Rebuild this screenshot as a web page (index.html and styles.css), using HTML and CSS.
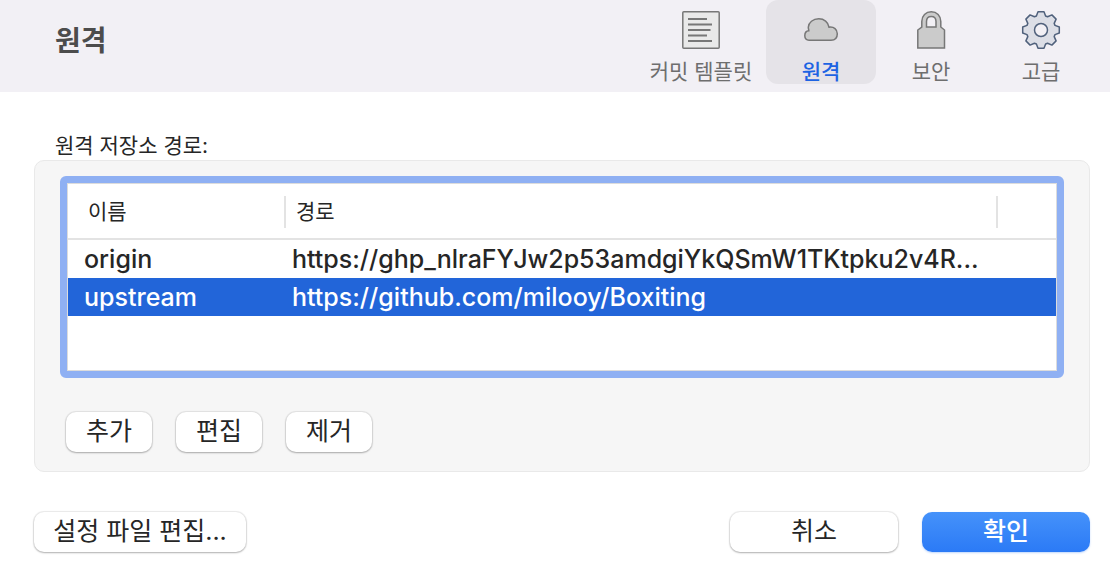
FILE: index.html
```html
<!DOCTYPE html>
<html lang="ko">
<head>
  <meta charset="UTF-8" />
  <meta name="viewport" content="width=device-width, initial-scale=1" />
  <title>원격</title>
  <link rel="stylesheet" href="styles.css">
</head>
<body>

<header class="toolbar">
  <h1>원격</h1>
  <nav class="tabs">
    <button type="button" class="tab tab-wide">
      <svg width="40" height="40" viewBox="0 0 40 40" fill="none" stroke="#777" stroke-width="1.500">
        <rect x="1.800" y="1.800" width="36.400" height="36.400" rx="1" fill="#e9e9e9" />
        <path d="M7 9h19M7 14.500h24M7 20h22.500M7 25.500h19M7 31h24" stroke-width="2" />
      </svg>
      커밋 템플릿
    </button>
    <button type="button" class="tab active">
      <svg width="40" height="40" viewBox="0 0 40 40" fill="#cbcbcb" stroke="#777" stroke-width="1.500">
        <path d="M8 30.300C5.300 30.300 3.800 28.500 3.800 25.800C3.800 23 5.300 21 7.800 20.800C7.800 19.500 7.300 18.800 7.300 17.300C7.500 12.500 12 8.800 17.800 8.800C23 8.800 27.300 12 28 17.200C33 16.500 36.300 19.500 36.300 23.800C36.300 27.800 33.800 30.300 30 30.300Z" />
      </svg>
      원격
    </button>
    <button type="button" class="tab">
      <svg width="40" height="40" viewBox="0 0 40 40" fill="#cbcbcb" stroke="#777" stroke-width="1.500">
        <path d="M6.800 38V20L10.800 17V11.500C10.800 5.800 14.800 1.800 20.300 1.800S29.800 5.800 29.800 11.500V17L33.500 20V38Z" />
        <path d="M15.500 17V11.500C15.500 8.300 17.500 6.500 20.300 6.500S25 8.300 25 11.500V17Z" fill="#f2f0f5" />
      </svg>
      보안
    </button>
    <button type="button" class="tab">
      <svg width="40" height="40" viewBox="0 0 40 40" fill="#dcdee6" stroke="#50617c" stroke-width="1.500" stroke-linejoin="round">
        <g transform="translate(20 20)">
          <path d="M-4.600-14L-3-18.300H3L4.600-14L6.600-13.200L10.900-15.100L15.100-10.900L13.200-6.600L14-4.600L18.300-3V3L14 4.600L13.200 6.600L15.100 10.900L10.900 15.100L6.600 13.200L4.600 14L3 18.300H-3L-4.600 14L-6.600 13.200L-10.900 15.100L-15.100 10.900L-13.200 6.600L-14 4.600L-18.300 3V-3L-14-4.600L-13.200-6.600L-15.100-10.900L-10.900-15.100L-6.600-13.200Z" />
          <circle r="6.500" fill="#f2f0f5" />
        </g>
      </svg>
      고급
    </button>
  </nav>
</header>

<main>
  <h2 id="remotes-title">원격 저장소 경로:</h2>

  <section class="group">
    <div class="table-frame">
      <table aria-labelledby="remotes-title">
        <colgroup>
          <col class="col-name">
          <col>
          <col class="col-end">
        </colgroup>
        <thead>
          <tr>
            <th><span>이름</span></th>
            <th><span>경로</span></th>
            <th></th>
          </tr>
        </thead>
        <tbody>
          <tr>
            <td>origin</td>
            <td>https://ghp_nlraFYJw2p53amdgiYkQSmW1TKtpku2v4R...</td>
            <td></td>
          </tr>
          <tr class="selected">
            <td>upstream</td>
            <td>https://github.com/milooy/Boxiting</td>
            <td></td>
          </tr>
        </tbody>
      </table>
    </div>
    <div class="actions">
      <button type="button" class="btn">추가</button>
      <button type="button" class="btn">편집</button>
      <button type="button" class="btn">제거</button>
    </div>
  </section>

  <footer class="actions">
    <button type="button" class="btn btn-config">설정 파일 편집...</button>
    <button type="button" class="btn btn-wide">취소</button>
    <button type="button" class="btn btn-wide btn-primary">확인</button>
  </footer>
</main>

</body>
</html>
```
FILE: styles.css
```css
* {
  box-sizing: border-box;
}
body {
  margin: 0;
  background-color: #fff;
  color: #262626;
  font-family: Inter, "Noto Sans CJK KR", sans-serif;
}
button {
  border: none;
  margin: 0;
  font-family: inherit;
  white-space: nowrap;
}
.toolbar {
  display: flex;
  justify-content: space-between;
  height: 92px;
  padding: 0 14px 0 55px;
  background-color: #f2f0f5;
}
h1 {
  margin: 0;
  padding-top: 20px;
  font-size: 28px;
  line-height: 42px;
  font-weight: bold;
  color: #4c4c4c;
}
.tabs {
  display: flex;
}
.tab {
  display: flex;
  flex-direction: column;
  align-items: center;
  width: 110px;
  height: 84px;
  padding: 10px 0 0;
  border-radius: 12px;
  background: none;
  color: #6e6e6e;
  font-size: 21px;
  line-height: 44px;
}
.tab svg {
  flex: none;
}
.tab-wide {
  width: 130px;
}
.tab.active {
  background-color: #e5e3e8;
  color: #1d63e3;
  font-weight: 500;
}
main {
  padding: 40px 20px 30px 34px;
}
h2 {
  margin: 0;
  padding-left: 21px;
  font-size: 21px;
  line-height: 28px;
  font-weight: normal;
}
.group {
  padding: 15px 25px 19px;
  border: 1px solid #e9e9e9;
  border-radius: 10px;
  background-color: #f6f6f6;
}
.table-frame {
  height: 202px;
  padding: 0 1px;
  border: 7px solid #8fb0f3;
  border-radius: 6px;
  background-color: #fff;
  box-shadow: inset 0 0 0 1px #dcdcdc;
}
table {
  width: 100%;
  table-layout: fixed;
  border-spacing: 0;
}
.col-name {
  width: 218px;
}
.col-end {
  width: 58px;
}
th {
  height: 57px;
  padding: 2px 0 0;
  border-bottom: 2px solid #e3e3e3;
  font-size: 21px;
  font-weight: normal;
  text-align: left;
}
th span {
  display: block;
  padding-left: 10px;
  border-right: 2px solid #e3e3e3;
  line-height: 32px;
}
th:first-child span {
  padding-left: 20px;
}
td {
  height: 38px;
  padding: 0 0 0 6px;
  font-size: 25px;
  font-weight: 500;
  line-height: 38px;
  white-space: nowrap;
}
td:first-child {
  padding-left: 16px;
}
.selected {
  background-color: #2265d9;
  color: #fff;
}
.actions {
  display: flex;
  gap: 24px;
}
.group .actions {
  padding: 34px 0 0 6px;
}
footer {
  padding-top: 40px;
}
.btn {
  min-width: 86px;
  height: 40px;
  padding: 0 0 2px;
  border-radius: 10px;
  background-color: #fff;
  box-shadow: 0 0 1px 1px rgba(0, 0, 0, 0.08), 0 1px 2px rgba(0, 0, 0, 0.25);
  color: #262626;
  font-size: 25px;
  line-height: 36px;
}
.btn-config {
  width: 212px;
  margin-right: auto;
}
.btn-wide {
  width: 168px;
}
.btn-primary {
  background: linear-gradient(#4592fa, #2b7af6);
  box-shadow: 0 1px 2px rgba(43, 122, 246, 0.3);
  color: #fff;
  font-weight: 500;
}
```
